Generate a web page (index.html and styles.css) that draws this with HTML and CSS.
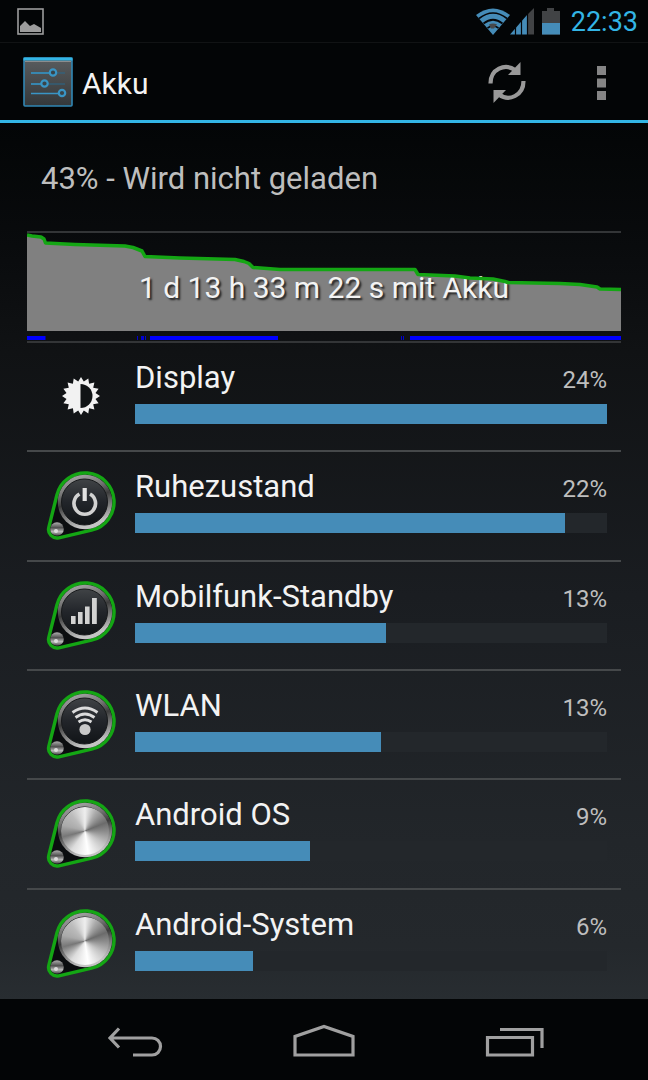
FILE: index.html
```html
<!DOCTYPE html>
<html lang="de">
<head>
<meta charset="utf-8">
<meta name="viewport" content="width=device-width, initial-scale=1">
<title>Akku</title>
<link rel="stylesheet" href="styles.css">
</head>
<body>
<svg class="defs" aria-hidden="true">
  <defs>
    <linearGradient id="ring" x1="0" y1="0" x2="0.3" y2="1">
      <stop offset="0" stop-color="#b5b5b5"/><stop offset="0.35" stop-color="#777"/><stop offset="0.55" stop-color="#3c3c3c"/><stop offset="0.7" stop-color="#6c6c6c"/><stop offset="1" stop-color="#c4c4c4"/>
    </linearGradient>
    <linearGradient id="face" x1="0" y1="0" x2="0" y2="1">
      <stop offset="0" stop-color="#404346"/><stop offset="0.5" stop-color="#22252a"/><stop offset="1" stop-color="#111417"/>
    </linearGradient>
    <linearGradient id="stud" x1="0" y1="0" x2="0" y2="1">
      <stop offset="0" stop-color="#b0b0b0"/><stop offset="0.4" stop-color="#505050"/><stop offset="0.7" stop-color="#bbb"/><stop offset="1" stop-color="#444"/>
    </linearGradient>
    <linearGradient id="panel" x1="0" y1="0" x2="0" y2="1">
      <stop offset="0" stop-color="#5a5d5f"/><stop offset="1" stop-color="#34383a"/>
    </linearGradient>
    <symbol id="badge" viewBox="16 8 72 72">
      <path d="M26.9 35A29 29 0 1 1 61.6 70.2L28.9 77.8A8.5 8.5 0 0 1 18.8 67.4Z" fill="#0b0d0f" stroke="#14a614" stroke-width="3.4"/>
      <circle cx="55" cy="42" r="27.2" fill="url(#ring)"/>
      <circle cx="54.5" cy="42" r="23" fill="url(#face)" stroke="#17191b" stroke-width="1"/>
      <circle cx="27" cy="69" r="6.8" fill="url(#stud)"/>
      <circle cx="26" cy="71" r="2" fill="#ddd"/>
    </symbol>
  </defs>
</svg>

<div class="status-bar">
  <svg class="status-picture" viewBox="0 0 27 27" aria-label="Bild"><rect x="1" y="1" width="25" height="25" fill="none" stroke="#9c9c9c" stroke-width="1.6"/><path d="M3 24v-6l5-5 5 5 4-2 7 4v4z" fill="#9c9c9c"/></svg>
  <div class="status-right">
    <svg class="status-wifi" viewBox="0 0 34 27" aria-label="WLAN">
      <path d="M17 27L0 7Q17-6 34 7Z" fill="#458cb8"/>
      <path d="M3 10.5Q17-.5 31 10.5M7.500 15.500Q17 8 26.500 15.500M11.500 20Q17 16 22.500 20" fill="none" stroke="#050608" stroke-width="1.7"/>
      <path d="M13 16.500q4-2 8 0l-3 4h-3z" fill="#47494b"/>
    </svg>
    <svg class="status-signal" viewBox="0 0 24 27" aria-label="Signal">
      <path d="M0 26.500L17 7v19.500z" fill="#458cb8"/><path d="M18 6l6-6v26.500h-6z" fill="#414345"/><path d="M5.500 18v9M11.500 12v15M17.500 5v22" stroke="#050608" stroke-width="1.200"/>
    </svg>
    <svg class="status-battery" viewBox="0 0 18 27" aria-label="Akku 43%">
      <path d="M0 3h5V0h7v3h6v23.500H0z" fill="#414345"/><path d="M0 15h18v11.500H0z" fill="#458cb8"/>
    </svg>
    <time class="clock">22:33</time>
  </div>
</div>

<header class="action-bar">
  <svg class="app-icon" viewBox="0 0 50 50" aria-hidden="true">
    <rect x="1" y="1" width="48" height="48" rx="1" fill="url(#panel)" stroke="#3187b4" stroke-width="1.600"/>
    <path d="M0.500 2h49" stroke="#33b5e5" stroke-width="3"/><path d="M2 4.500h46" stroke="#8b8d8e"/>
    <path d="M8 16h34M8 27h34M8 36.500h28" stroke="#29688b" stroke-width="1.200"/>
    <path d="M8 16h18M8 27h11M8 36.500h28" stroke="#3995c5" stroke-width="1.600"/>
    <g fill="#394449" stroke="#3995c5" stroke-width="2.200"><circle cx="30" cy="15.500" r="3.200"/><circle cx="21.500" cy="26.500" r="3.200"/><circle cx="39" cy="36" r="3.200"/></g>
  </svg>
  <h1 class="title">Akku</h1>
  <button class="action" type="button" aria-label="Aktualisieren">
    <svg class="icon-refresh" viewBox="0 0 38 41"><path d="M2.500 21.500C2.500 7 17 1 27 8M35.500 19C35.500 33.500 21 40 11 32.500" fill="none" stroke="#999" stroke-width="4.200"/><path d="M32.500 0v13H20z" fill="#999"/><path d="M5.500 41V28H18z" fill="#999"/></svg>
  </button>
  <button class="action" type="button" aria-label="Weitere Optionen">
    <svg class="icon-more" viewBox="0 0 10 36"><path d="M1 1h9v9H1zM1 13.500h9v9H1zM1 26h9v9H1z" fill="#858585"/></svg>
  </button>
</header>

<main class="content">
  <p class="summary">43% - Wird nicht geladen</p>
  <section class="history">
    <div class="chart">
      <svg class="chart-layer" viewBox="0 0 594 98" preserveAspectRatio="none" aria-hidden="true"><path fill="#808080" d="M0 2L5 3 14 4 17 6 18.500 10 48 11.500 98 13 106 14.500 115 18 118 23.500 153 25 208 26.500 221 29.500 225 33.500 253 36.500H388L391 41.500 428 43 443 45 466 46 478 48.500 481 49.500 533 50.500 553 51.500 570 54 573 56 594 56.500V98H0Z"/></svg>
      <span class="chart-text">1 d 13 h 33 m 22 s mit Akku</span>
      <svg class="chart-layer" viewBox="0 0 594 98" preserveAspectRatio="none" aria-hidden="true"><path fill="none" stroke="#14a614" stroke-width="3.500" stroke-linejoin="round" d="M0 2L5 3 14 4 17 6 18.500 10 48 11.500 98 13 106 14.500 115 18 118 23.500 153 25 208 26.500 217 28.500 222 30.500 226 34.500 253 36.500H388L391 41.500 428 43 443 45 466 46 478 48.500 481 49.500 533 50.500 553 51.500 570 54 573 56 594 56.500"/></svg>
    </div>
    <svg class="activity" viewBox="0 0 594 4" preserveAspectRatio="none" aria-hidden="true"><path fill="#00f" d="M0 0h18.500v4H0zM123 0h128v4H123zM383 0h211v4H383z"/><path fill="#0000d0" d="M110 0h1v4h-1zM114 0h3v4h-3zM118 0h1v4h-1zM374 0h1v4h-1zM376 0h1v4h-1z"/></svg>
  </section>

  <ul class="usage">
    <li class="item">
      <svg class="item-icon" viewBox="16 8 72 72" aria-hidden="true">
        <path fill="#f2f2f2" d="M51 26l2.800 4.600L58.300 27.400l.8 5.300L64.400 31.600l-1.200 5.200L68.600 37.700l-3.100 4.400L70 45l-4.500 2.900 3.100 4.400-5.400 .9 1.200 5.200-5.300-1.100-.8 5.300-4.500-3.200L51 64l-2.800-4.600-4.500 3.200-.8-5.300-5.300 1.100 1.200-5.200-5.400-.9 3.100-4.400L32 45l4.500-2.900-3.100-4.400 5.400-.9-1.200-5.200 5.300 1.100 .8-5.300 4.500 3.200z"/>
        <path d="M50.500 33a12 12 0 0 1 0 24z" fill="#101315"/>
      </svg>
      <div class="item-body">
        <label class="item-name" for="u1">Display</label><span class="item-value">24%</span>
        <progress class="bar" id="u1" max="100" value="100"></progress>
      </div>
    </li>
    <li class="item">
      <svg class="item-icon" viewBox="16 8 72 72" aria-hidden="true"><use href="#badge" x="16" y="8" width="72" height="72"/>
        <path d="M49.500 34a10.800 10.800 0 1 0 10.500 0" fill="none" stroke="#d2d2d2" stroke-width="3.600"/><path d="M54.700 28v13" stroke="#e2e2e2" stroke-width="4.200"/>
      </svg>
      <div class="item-body">
        <label class="item-name" for="u2">Ruhezustand</label><span class="item-value">22%</span>
        <progress class="bar" id="u2" max="100" value="91.200"></progress>
      </div>
    </li>
    <li class="item">
      <svg class="item-icon" viewBox="16 8 72 72" aria-hidden="true"><use href="#badge" x="16" y="8" width="72" height="72"/>
        <path d="M41 46h4.600v8H41zM48 42h4.600v12H48zM55 36.500h4.600V54H55zM62 28h4.800v26H62z" fill="#d2d2d2"/>
      </svg>
      <div class="item-body">
        <label class="item-name" for="u3">Mobilfunk-Standby</label><span class="item-value">13%</span>
        <progress class="bar" id="u3" max="100" value="53.100"></progress>
      </div>
    </li>
    <li class="item">
      <svg class="item-icon" viewBox="16 8 72 72" aria-hidden="true"><use href="#badge" x="16" y="8" width="72" height="72"/>
        <path d="M42.500 33.500Q55 24.500 67.500 33.500M45.500 38.500Q55 31.500 64.500 38.500M48.500 43Q55 38.500 61.500 43" fill="none" stroke="#dcdcdc" stroke-width="2.800"/><circle cx="55" cy="50.500" r="5.600" fill="#c8c8c8"/>
      </svg>
      <div class="item-body">
        <label class="item-name" for="u4">WLAN</label><span class="item-value">13%</span>
        <progress class="bar" id="u4" max="100" value="52.200"></progress>
      </div>
    </li>
    <li class="item">
      <svg class="item-icon" viewBox="16 8 72 72" aria-hidden="true"><use href="#badge" x="16" y="8" width="72" height="72"/>
        <foreignObject x="31" y="19" width="48" height="48"><div class="knob"></div></foreignObject>
      </svg>
      <div class="item-body">
        <label class="item-name" for="u5">Android OS</label><span class="item-value">9%</span>
        <progress class="bar" id="u5" max="100" value="37.100"></progress>
      </div>
    </li>
    <li class="item">
      <svg class="item-icon" viewBox="16 8 72 72" aria-hidden="true"><use href="#badge" x="16" y="8" width="72" height="72"/>
        <foreignObject x="31" y="19" width="48" height="48"><div class="knob"></div></foreignObject>
      </svg>
      <div class="item-body">
        <label class="item-name" for="u6">Android-System</label><span class="item-value">6%</span>
        <progress class="bar" id="u6" max="100" value="25"></progress>
      </div>
    </li>
  </ul>
</main>

<nav class="nav-bar">
  <button class="nav-button" type="button" aria-label="Zurück"><svg class="nav-icon" viewBox="0 0 64 36"><path d="M6 16H49a8.500 8.500 0 0 1 0 17H30M16 6.500L7 16l9 9.500" fill="none" stroke="#a0a0a0" stroke-width="3.200"/></svg></button>
  <button class="nav-button" type="button" aria-label="Startseite"><svg class="nav-icon" viewBox="0 0 64 36"><path d="M3 33V14.500L32 4.500l29 10V33z" fill="none" stroke="#a0a0a0" stroke-width="3.200"/></svg></button>
  <button class="nav-button" type="button" aria-label="Letzte Apps"><svg class="nav-icon" viewBox="0 0 64 36"><path d="M6.500 15.500h45V33h-45zM19 7.500h42V26" fill="none" stroke="#a0a0a0" stroke-width="3.200"/></svg></button>
</nav>
</body>
</html>
```
FILE: styles.css
```css
* { box-sizing: border-box; }
body {
  margin: 0;
  min-height: 100vh;
  display: flex;
  flex-direction: column;
  background: #030506;
  color: #f3f3f3;
  font-family: Roboto, "Noto Sans", sans-serif;
  font-size: 30px;
  line-height: 36px;
}
svg { display: block; }
button { border: 0; padding: 0; background: none; cursor: pointer; }
.defs { position: absolute; width: 0; height: 0; }

.status-bar {
  display: flex;
  justify-content: space-between;
  align-items: center;
  height: 43px;
  padding: 0 10px 0 17px;
  border-bottom: 1px solid #111314;
}
.status-right { display: flex; align-items: center; }
.status-picture { width: 27px; height: 27px; }
.status-wifi { width: 34px; height: 27px; }
.status-signal { width: 24px; height: 27px; margin-right: 8px; }
.status-battery { width: 18px; height: 27px; margin-right: 11px; }
.clock { padding-top: 2px; font-size: 27px; color: #33b5e5; }

.action-bar {
  display: flex;
  align-items: center;
  height: 80px;
  padding-left: 23px;
  border-bottom: 3px solid #33b5e5;
}
.app-icon { width: 50px; height: 50px; margin-right: 9px; }
.title { flex: 1; margin: 0; padding-top: 4px; font-size: 30px; font-weight: 400; }
.action { display: grid; place-items: center; width: 94px; height: 77px; padding-top: 2px; }
.icon-refresh { width: 38px; height: 41px; }
.icon-more { width: 10px; height: 36px; }

.content {
  flex: 1;
  display: flex;
  flex-direction: column;
  padding: 0 27px;
  background: linear-gradient(#030506, #090b0d 14%, #101214 26%, #1a1d21 54%, #22262a 82%, #24282c 94%, #282d31);
}
.summary { margin: 0; padding: 38px 14px 34px; font-size: 31px; color: #bebebe; }
.history { border-top: 2px solid #333537; border-bottom: 2px solid #333537; }
.chart { position: relative; display: grid; place-items: center; height: 98px; padding-top: 12px; }
.chart-layer { position: absolute; inset: 0; width: 100%; height: 100%; }
.chart-text { position: relative; text-shadow: 2px 2px 2px #222; }
.activity { width: 100%; height: 4px; margin: 5px 0 1px; }

.usage {
  flex: 1;
  display: grid;
  grid-auto-rows: 1fr;
  margin: 0;
  padding: 0;
  list-style: none;
}
.item { display: flex; padding: 16px 14px 0 19px; border-bottom: 2px solid #45484a; }
.item:last-child { border-bottom: 0; }
.item-icon { flex: none; width: 72px; height: 72px; margin-right: 17px; }
.item-body {
  flex: 1;
  display: grid;
  grid-template-columns: 1fr auto;
  grid-template-rows: 36px 20px;
  row-gap: 8px;
  padding-top: 1px;
  align-content: start;
}
.item-name { font-size: 31px; }
.item-value { align-self: end; font-size: 24px; line-height: 32px; color: #bebebe; }
.bar {
  grid-column: 1 / -1;
  width: 100%;
  height: 20px;
  border: 0;
  appearance: none;
  background: #23272b;
}
.bar::-webkit-progress-bar { background: #23272b; }
.bar::-webkit-progress-value { background: #458cb8; }
.knob {
  width: 48px;
  height: 48px;
  border-radius: 50%;
  background: conic-gradient(#eee 0deg, #aaa 30deg, #6b6b6b 68deg, #8a8a8a 90deg, #c4c4c4 125deg, #fff 172deg, #dcdcdc 215deg, #777 255deg, #aaa 285deg, #bcbcbc 320deg, #eee 360deg);
}

.nav-bar {
  display: flex;
  justify-content: center;
  height: 81px;
  padding: 0 40px;
  background: #030506;
}
.nav-button { flex: 1; display: grid; place-items: center; }
.nav-icon { width: 64px; height: 36px; }
```
